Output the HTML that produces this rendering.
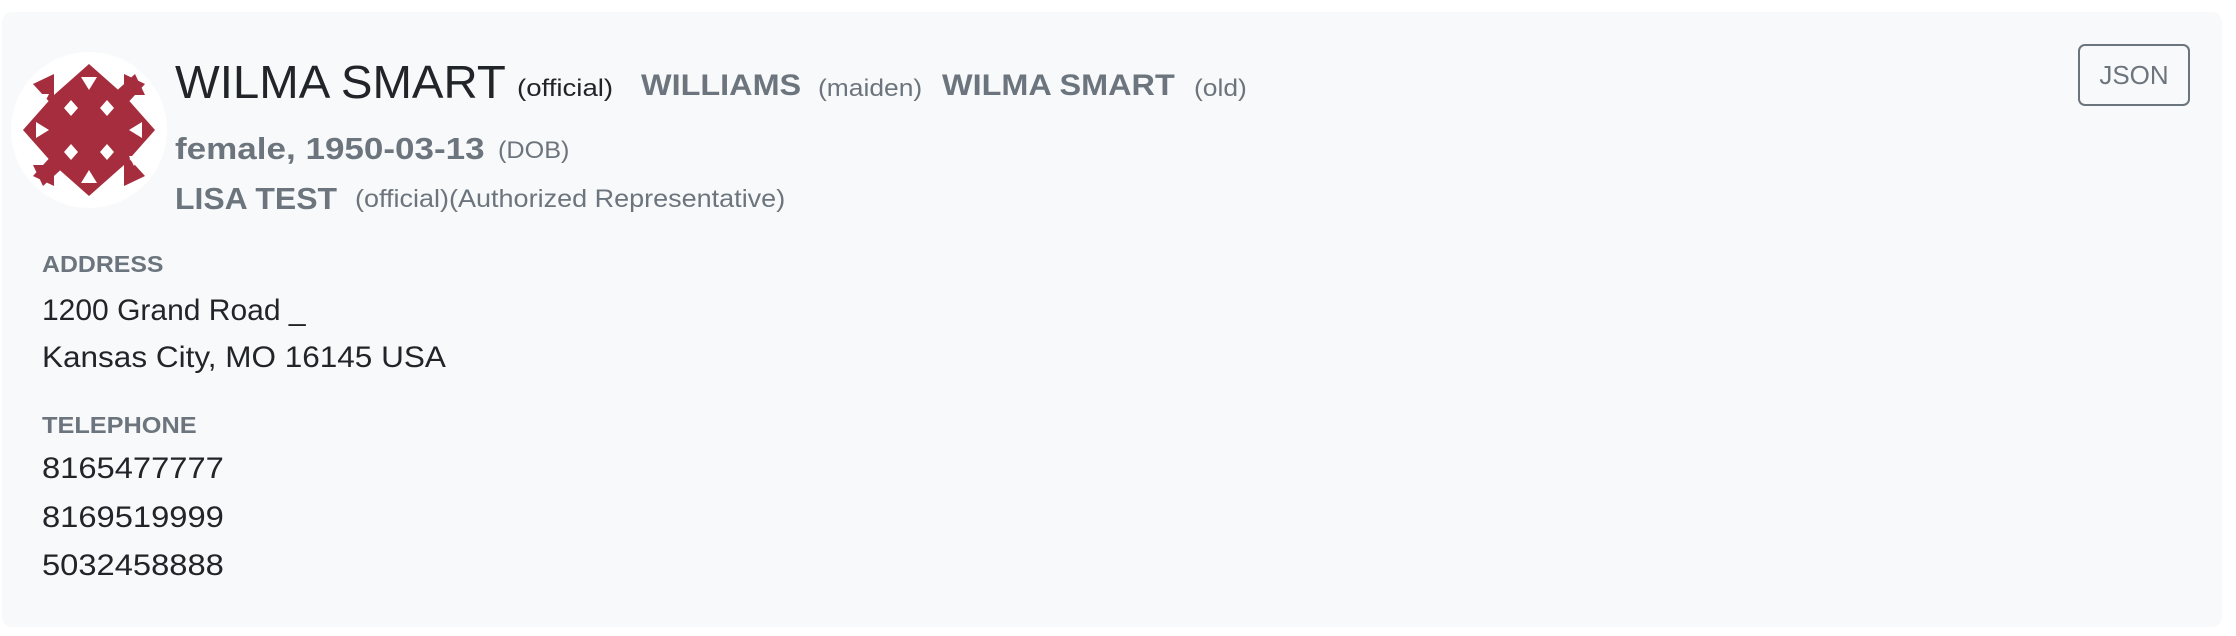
<!DOCTYPE html>
<html><head><meta charset="utf-8"><style>
body{margin:0;width:2236px;height:636px;background:#fff;font-family:"Liberation Sans",sans-serif;position:relative;overflow:hidden}
.card{position:absolute;left:2px;top:12px;width:2220px;height:615px;background:#f8f9fa;border-radius:10px}
.t{position:absolute;white-space:nowrap;line-height:1;transform-origin:0 0}
.g{color:#6c757d}
.b{font-weight:bold}
.d{color:#212529}
.json{position:absolute;left:2078px;top:44px;width:108px;height:58px;border:2px solid #6c757d;border-radius:7px;color:#6c757d;font-size:26px;text-align:center;line-height:58px}
</style></head><body>
<div class="card"></div>
<svg style="position:absolute;left:11px;top:52px" width="156" height="156" viewBox="0 0 156 156">
<circle cx="78" cy="78" r="78" fill="#fff"/>
<g fill="#a62d3e">
<rect x="43" y="43" width="70" height="70"/>
<polygon points="43,43 78,12 113,43"/><polygon points="43,113 78,144 113,113"/>
<polygon points="43,43 12,78 43,113"/><polygon points="113,43 144,78 113,113"/>
<polygon points="22,32 43,22 43,55"/><polygon points="134,124 113,134 113,101"/>
<polygon points="124,22 134,43 101,43"/><polygon points="32,134 22,113 55,113"/>
<polygon points="113,22 134,32 113,55"/><polygon points="43,134 22,124 43,101"/>
</g>
<g fill="#fff">
<polygon points="60,48 67,56 60,64 53,56"/><polygon points="96,48 103,56 96,64 89,56"/>
<polygon points="60,92 67,100 60,108 53,100"/><polygon points="96,92 103,100 96,108 89,100"/>
<polygon points="70,25 86,25 78,38"/><polygon points="70,131 86,131 78,118"/>
<polygon points="25,70 25,86 38,78"/><polygon points="131,70 131,86 118,78"/>
<polygon points="28,42 38,42 33,52"/><polygon points="118,104 128,104 123,114"/>
</g>
</svg>
<div class="t d" style="left:175px;top:59px;font-size:46px;transform:scaleX(1.03)">WILMA SMART</div>
<div class="t d" style="left:517px;top:77px;font-size:24px;transform:scaleX(1.15)">(official)</div>
<div class="t g b" style="left:641px;top:71px;font-size:30px;transform:scaleX(1.08)">WILLIAMS</div>
<div class="t g" style="left:818px;top:77px;font-size:24px;transform:scaleX(1.1)">(maiden)</div>
<div class="t g b" style="left:942px;top:71px;font-size:30px;transform:scaleX(1.08)">WILMA SMART</div>
<div class="t g" style="left:1194px;top:77px;font-size:24px;transform:scaleX(1.1)">(old)</div>
<div class="t g b" style="left:175px;top:133px;font-size:31px;transform:scaleX(1.13)">female, 1950-03-13</div>
<div class="t g" style="left:498px;top:139px;font-size:24px;transform:scaleX(1.05)">(DOB)</div>
<div class="t g b" style="left:175px;top:183px;font-size:31px;transform:scaleX(1.03)">LISA TEST</div>
<div class="t g" style="left:355px;top:187px;font-size:25px;transform:scaleX(1.08)">(official)(Authorized Representative)</div>
<div class="t g b" style="left:42px;top:253px;font-size:23px;transform:scaleX(1.08)">ADDRESS</div>
<div class="t d" style="left:42px;top:296px;font-size:30px">1200 Grand Road _</div>
<div class="t d" style="left:42px;top:343px;font-size:30px;transform:scaleX(1.05)">Kansas City, MO 16145 USA</div>
<div class="t g b" style="left:42px;top:414px;font-size:23px;transform:scaleX(1.1)">TELEPHONE</div>
<div class="t d" style="left:42px;top:454px;font-size:30px;transform:scaleX(1.09)">8165477777</div>
<div class="t d" style="left:42px;top:503px;font-size:30px;transform:scaleX(1.09)">8169519999</div>
<div class="t d" style="left:42px;top:551px;font-size:30px;transform:scaleX(1.09)">5032458888</div>
<div class="json">JSON</div>
</body></html>
